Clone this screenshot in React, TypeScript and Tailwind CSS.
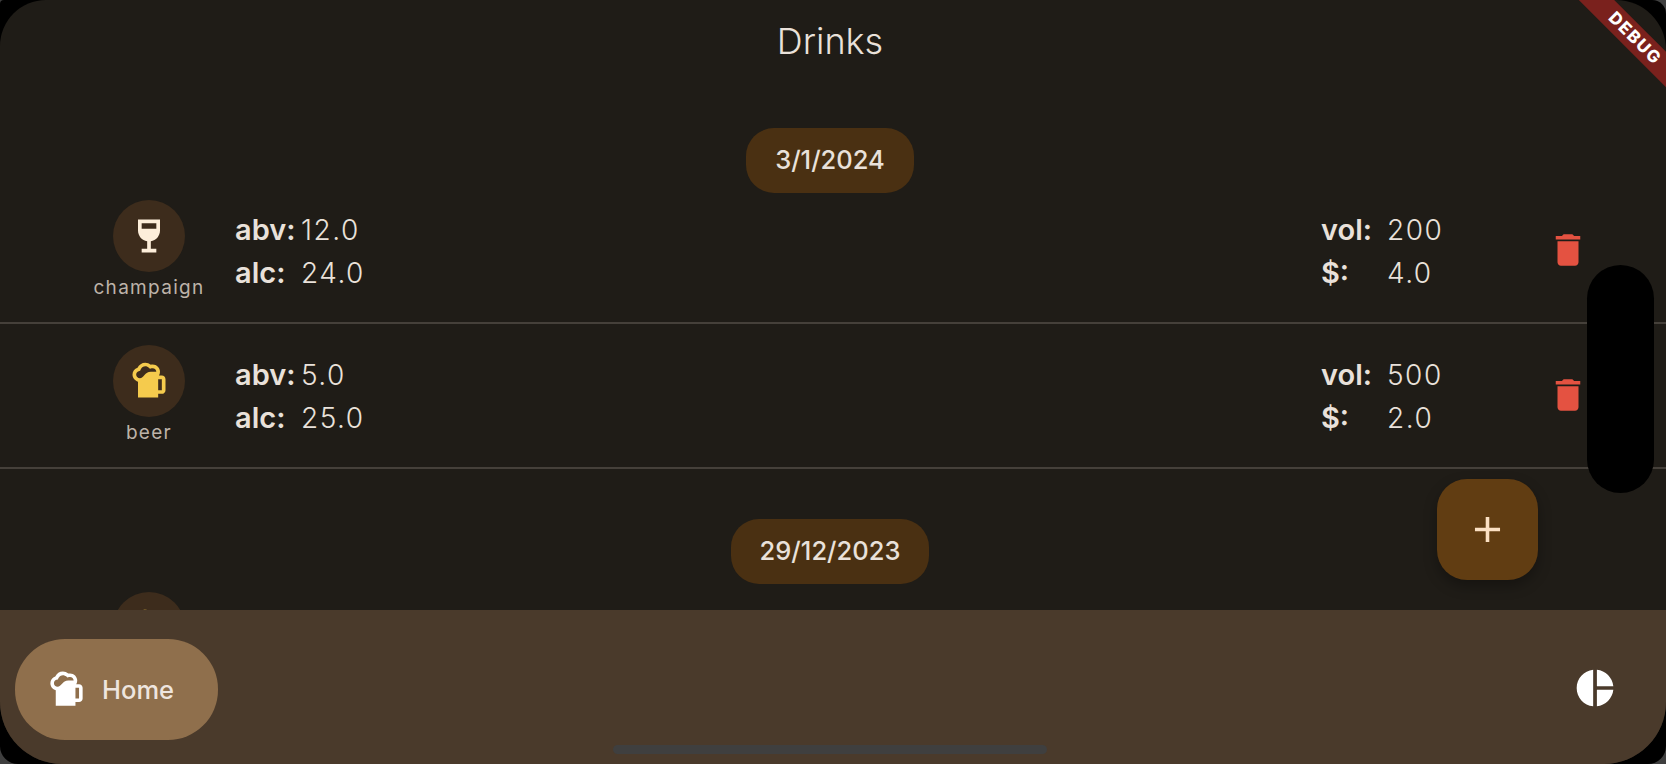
import React from 'react';
import { MdAdd, MdDelete, MdPieChart, MdSportsBar, MdWineBar } from 'react-icons/md';

type Drink = {
  name: string;
  kind: 'wine' | 'beer';
  abv: string;
  alc: string;
  vol: string;
  price: string;
};

const GROUPS: { date: string; rowsClass: string; drinks: Drink[] }[] = [
  {
    date: '3/1/2024',
    rowsClass: 'mt-[7px]',
    drinks: [
      { name: 'champaign', kind: 'wine', abv: '12.0', alc: '24.0', vol: '200', price: '4.0' },
      { name: 'beer', kind: 'beer', abv: '5.0', alc: '25.0', vol: '500', price: '2.0' },
    ],
  },
  {
    date: '29/12/2023',
    rowsClass: 'mt-[8px]',
    drinks: [{ name: 'beer', kind: 'beer', abv: '5.0', alc: '25.0', vol: '500', price: '2.0' }],
  },
];

const Stat = ({ label, value }: { label: string; value: string }) => (
  <div className="flex h-[43px] items-center text-[#e9e1da]">
    <span className="w-[66px] text-[29px] font-semibold">{label}</span>
    <span className="text-[28px] font-light tracking-[1.5px]">{value}</span>
  </div>
);

const DrinkRow = ({ drink }: { drink: Drink }) => (
  <div className="flex h-[124px] items-start border-b-2 border-[#45403a]">
    <div className="flex w-[235px] shrink-0 flex-col items-center pl-[63px]">
      <div className="flex h-[72px] w-[72px] items-center justify-center rounded-full bg-[#3d2c1c]">
        {drink.kind === 'wine' ? (
          <MdWineBar className="text-[#fdeeda]" size={44} />
        ) : (
          <MdSportsBar className="text-[#f5cb4d]" size={44} />
        )}
      </div>
      <span className="mt-[4px] text-[19px] leading-[24px] tracking-[1.3px] text-[#bdb3a9]">{drink.name}</span>
    </div>
    <div className="mt-[8px] flex flex-1 flex-col">
      <Stat label="abv:" value={drink.abv} />
      <Stat label="alc:" value={drink.alc} />
    </div>
    <div className="mt-[8px] flex w-[210px] flex-col">
      <Stat label="vol:" value={drink.vol} />
      <Stat label="$:" value={drink.price} />
    </div>
    <div className="flex w-[135px] justify-start pl-[16px] pt-[29px]">
      <MdDelete className="text-[#e45241]" size={42} />
    </div>
  </div>
);

const DateGroup = ({ date, rowsClass, drinks }: { date: string; rowsClass: string; drinks: Drink[] }) => (
  <div className="flex flex-col">
    <div className="flex justify-center pr-[6px]">
      <div className="flex h-[65px] items-center rounded-[28px] bg-[#4a3012] px-[29px] text-[25.5px] font-medium text-[#e9e1da]">
        {date}
      </div>
    </div>
    <div className={`${rowsClass} flex flex-col gap-[21px]`}>
      {drinks.map((d, i) => (
        <DrinkRow key={i} drink={d} />
      ))}
    </div>
  </div>
);

export default function App() {
  return (
    <div className="relative h-[764px] w-[1666px] overflow-hidden bg-[#3f3f3f] font-['Inter',sans-serif]">
      <div className="h-full w-full overflow-hidden rounded-tl-[4px] rounded-tr-[14px] rounded-bl-[18px] rounded-br-[18px] bg-black">
        <div className="relative flex h-full w-full flex-col overflow-hidden rounded-tl-[46px] rounded-tr-[50px] rounded-bl-[62px] rounded-br-[62px] bg-[#1f1c17]">
          <main className="flex min-h-0 flex-1 flex-col gap-[50px] overflow-hidden">
            <header className="-mb-[4px] flex h-[82px] shrink-0 items-center justify-center pr-[6px] text-[36px] font-light text-[#e9e1da]">
              Drinks
            </header>
            {GROUPS.map((g) => (
              <DateGroup key={g.date} date={g.date} rowsClass={g.rowsClass} drinks={g.drinks} />
            ))}
          </main>
          <nav className="flex h-[154px] shrink-0 items-start justify-between bg-[#4a3a2b] pl-[15px] pr-[49px] pt-[29px]">
            <div className="flex h-[101px] w-[203px] items-center gap-[14px] rounded-[50px] bg-[#8f6f4c] pl-[30px]">
              <MdSportsBar className="text-white" size={43} />
              <span className="mt-[2px] text-[25.5px] font-medium text-[#eee5df]">Home</span>
            </div>
            <MdPieChart className="mt-[27px] text-white" size={44} />
          </nav>
          <div className="absolute right-[-59px] top-[26px] flex h-[25px] w-[180px] rotate-45 items-center justify-center bg-[#7a211d] text-[17px] font-extrabold tracking-[1.5px] text-white">
            DEBUG
          </div>
        </div>
      </div>

      {/* floating bits */}
      <button className="absolute left-[1437px] top-[479px] flex h-[101px] w-[101px] items-center justify-center rounded-[30px] bg-[#613d12] shadow-[0_6px_14px_rgba(0,0,0,0.3)]">
        <MdAdd className="text-[#fbe0c3]" size={43} />
      </button>
      <div className="absolute left-[1587px] top-[265px] h-[228px] w-[67px] rounded-[34px] bg-black" />
      <div className="absolute left-[613px] top-[745px] h-[9px] w-[434px] rounded-full bg-[#3f3f3f]" />
    </div>
  );
}
